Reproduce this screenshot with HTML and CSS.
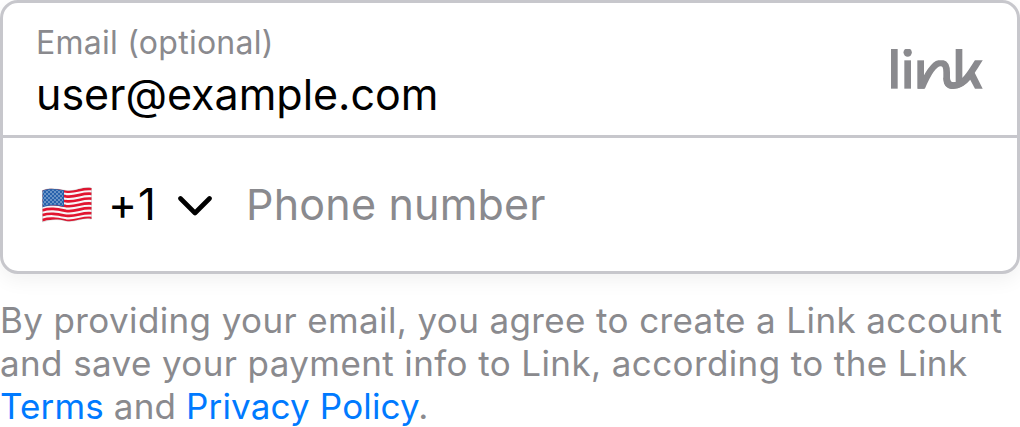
FILE: index.html
```html
<!DOCTYPE html>
<html lang="en">
<head>
<meta charset="utf-8">
<title>Link signup</title>
<link rel="stylesheet" href="styles.css">
</head>
<body>
<main class="signup">
  <section class="card">
    <div class="row email-row">
      <div class="field">
        <div class="label">Email (optional)</div>
        <div class="value">user@example.com</div>
      </div>
      <svg class="logo" viewBox="0 0 276 123" role="img" aria-label="link">
        <defs><clipPath id="low"><rect x="79" y="34" width="197" height="85"/></clipPath></defs>
        <g fill="#8a8a8e">
          <rect width="20" height="119"/>
          <circle cx="50" cy="10.5" r="12.5"/>
          <rect x="40" y="34" width="20" height="85"/>
          <rect x="79" y="34" width="20" height="85"/>
          <rect x="194" width="20" height="107"/>
          <path d="M232 82L248 65L275 119H252Z"/>
        </g>
        <g fill="none" stroke="#8a8a8e" stroke-width="20">
          <path clip-path="url(#low)" d="M88 126C110 72 130 42 149 42C164 42 167 54 167 70V88C167 103 174 110 187 110C218 110 240 72 268 26"/>
          <path d="M167 86C167 103 174 110 187 110C204 110 220 99 232 84"/>
        </g>
      </svg>
    </div>
    <div class="row phone-row">
      <svg class="flag" viewBox="0 0 50 36" role="img" aria-label="United States">
        <defs>
          <clipPath id="wave"><path id="shape" d="M0.5 3.5C8 .5 14 2 24 3.500C34 4.800 40-1 49.500 1V32C40 30 34 35.500 24 34C14 31.500 8 32.500 .5 35Z"/></clipPath>
          <pattern id="stars" width="4" height="4" patternUnits="userSpaceOnUse"><circle cx="1" cy="1" r=".75"/><circle cx="3" cy="3" r=".75"/></pattern>
        </defs>
        <g clip-path="url(#wave)">
          <rect width="50" height="36" fill="#f7f5f7"/>
          <g fill="none" stroke="#e1142f" stroke-width="2.7">
            <path id="s" d="M0 4C8 1.500 14 2.500 24 4.500C34 6 40 .5 50 2"/>
            <use href="#s" y="4.85"/><use href="#s" y="9.7"/><use href="#s" y="14.55"/><use href="#s" y="19.4"/><use href="#s" y="24.25"/><use href="#s" y="29.1"/>
          </g>
          <path d="M0 3C8 .5 14 1.500 22 3V19.800C14 18.300 8 17.800 0 20.500Z" fill="#2862ac"/>
          <path d="M1 4C8 2 14 2.500 21 4V18.800C14 17.300 8 17 1 19Z" class="stars"/>
        </g>
        <use href="#shape" fill="none" stroke="#777" stroke-opacity=".35" stroke-width=".7"/>
      </svg>
      <span class="code">+1</span>
      <svg class="chevron" viewBox="0 0 34 20"><path d="M2.5 2.5L17 17L31.5 2.5"/></svg>
      <span class="placeholder">Phone number</span>
    </div>
  </section>
  <p class="legal"><span class="line one">By providing your email, you agree to create a Link account</span><span class="line two">and save your payment info to Link, according to the Link</span><span class="line three"><a>Terms</a> and <a>Privacy Policy</a>.</span></p>
</main>
</body>
</html>
```
FILE: styles.css
```css
* { box-sizing: border-box; }
body { margin: 0; background: #fff; font-family: Inter, "Liberation Sans", sans-serif; color: #000; overflow: hidden; }
.card { height: 274px; border: 3px solid #c7c7cc; border-radius: 18px; background: #fff; box-shadow: 0 6px 20px rgba(0,0,0,.06); }
.row { display: flex; }
.email-row { height: 135px; border-bottom: 3px solid #c7c7cc; justify-content: space-between; padding: 20px 34px 0 33px; }
.label { font-size: 32px; line-height: 40px; color: #8a8a8e; white-space: nowrap; letter-spacing: .26px; }
.value { font-size: 43px; line-height: 52px; margin-top: 5px; white-space: nowrap; }
.logo { width: 92px; height: 41px; margin-top: 26px; flex: none; }
.phone-row { height: 133px; align-items: center; padding-left: 39px; }
.flag { width: 50px; height: 36px; flex: none; }
.stars { fill: url(#stars); }
#stars circle { fill: #c9dced; }
.code { font-size: 44px; line-height: 52px; margin-left: 16px; width: 50px; margin-bottom: 2px; letter-spacing: .8px; white-space: nowrap; }
.chevron { width: 34px; height: 20px; margin-left: 20px; margin-top: 3px; flex: none; }
.chevron path { fill: none; stroke: #000; stroke-width: 4.6; stroke-linecap: round; stroke-linejoin: round; }
.placeholder { font-size: 43px; line-height: 52px; margin-left: 34px; margin-bottom: 2px; letter-spacing: .2px; color: #8a8a8e; white-space: nowrap; }
.legal { margin: 25px 0 0; font-size: 35px; line-height: 43px; color: #8a8a8e; white-space: nowrap; }
.line { display: block; }
.one { letter-spacing: .375px; }
.two { letter-spacing: .39px; }
.three { letter-spacing: .15px; }
.legal a { color: #007aff; }
```
